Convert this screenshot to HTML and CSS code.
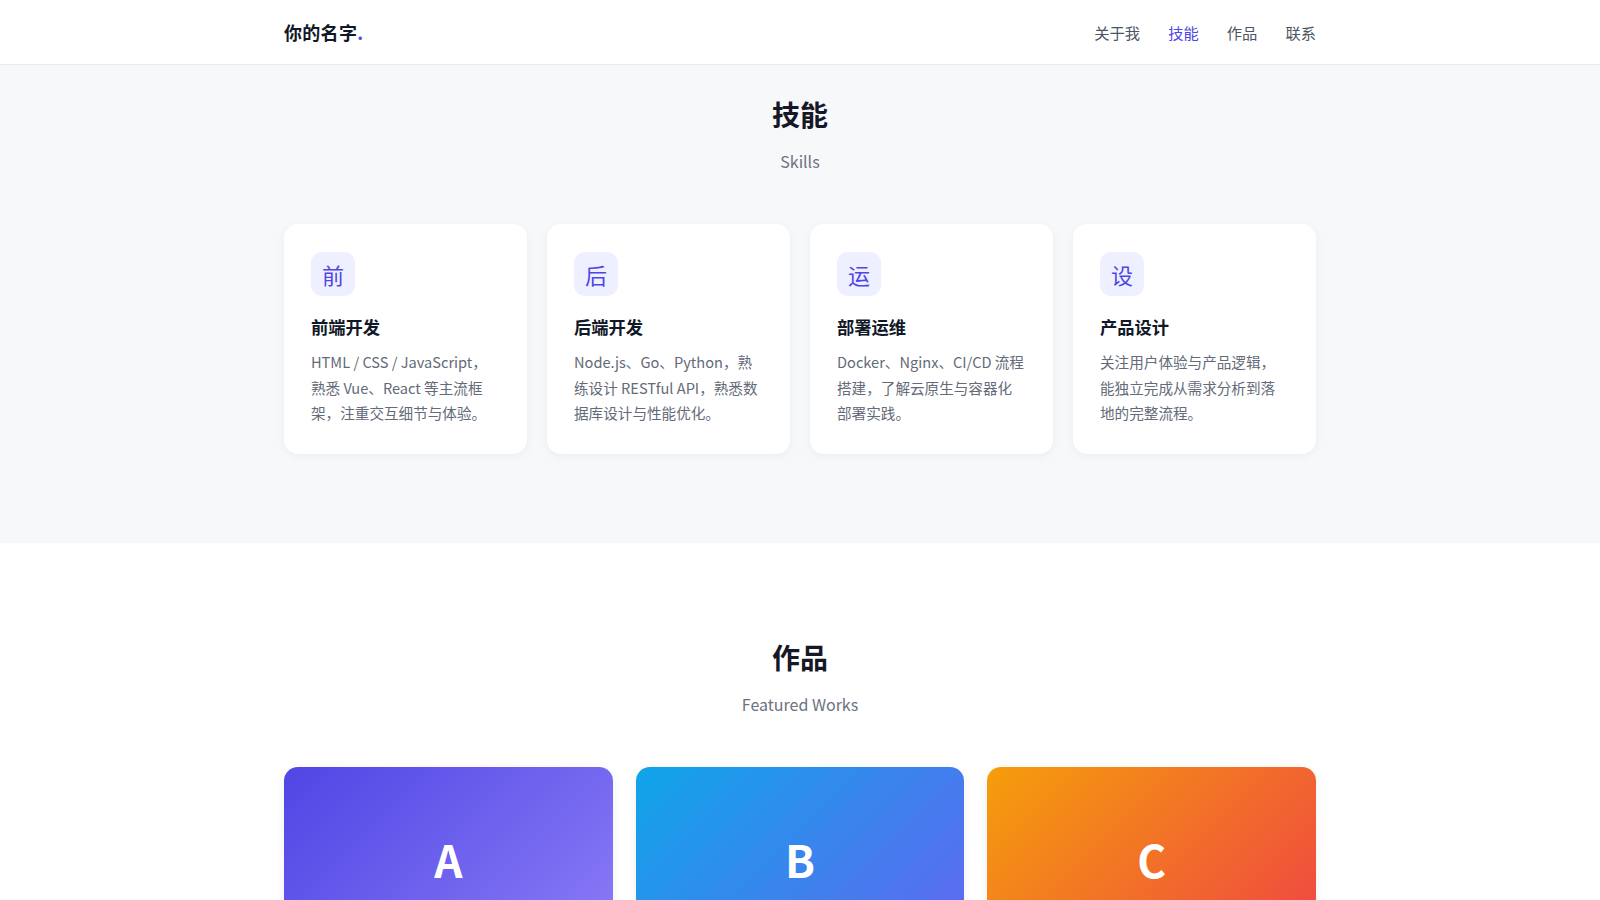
FILE: index.html
```html
<!DOCTYPE html>
<html lang="zh-CN">
<head>
<meta charset="utf-8">
<title>你的名字</title>
<link rel="stylesheet" href="styles.css">
</head>
<body>
<header class="site-header">
  <div class="container header-inner">
    <div class="logo">你的名字<span class="logo-dot">.</span></div>
    <nav class="nav">
      <a href="#about">关于我</a>
      <a href="#skills" class="active">技能</a>
      <a href="#works">作品</a>
      <a href="#contact">联系</a>
    </nav>
  </div>
</header>

<section class="section section-skills" id="skills">
  <div class="container">
    <h2 class="section-title">技能</h2>
    <p class="section-sub">Skills</p>
    <div class="skills-grid">
      <div class="skill-card">
        <div class="skill-icon">前</div>
        <h3 class="skill-title">前端开发</h3>
        <p class="skill-desc">HTML / CSS / JavaScript，熟悉 Vue、React 等主流框架，注重交互细节与体验。</p>
      </div>
      <div class="skill-card">
        <div class="skill-icon">后</div>
        <h3 class="skill-title">后端开发</h3>
        <p class="skill-desc">Node.js、Go、Python，熟练设计 RESTful API，熟悉数据库设计与性能优化。</p>
      </div>
      <div class="skill-card">
        <div class="skill-icon">运</div>
        <h3 class="skill-title">部署运维</h3>
        <p class="skill-desc">Docker、Nginx、CI/CD 流程搭建，了解云原生与容器化部署实践。</p>
      </div>
      <div class="skill-card">
        <div class="skill-icon">设</div>
        <h3 class="skill-title">产品设计</h3>
        <p class="skill-desc">关注用户体验与产品逻辑，能独立完成从需求分析到落地的完整流程。</p>
      </div>
    </div>
  </div>
</section>

<section class="section section-works" id="works">
  <div class="container">
    <h2 class="section-title">作品</h2>
    <p class="section-sub">Featured Works</p>
    <div class="works-grid">
      <div class="work-card">
        <div class="work-cover cover-a">A</div>
        <div class="work-body"></div>
      </div>
      <div class="work-card">
        <div class="work-cover cover-b">B</div>
        <div class="work-body"></div>
      </div>
      <div class="work-card">
        <div class="work-cover cover-c">C</div>
        <div class="work-body"></div>
      </div>
    </div>
  </div>
</section>
</body>
</html>
```

FILE: styles.css
```css
* {
  box-sizing: border-box;
}

html, body {
  margin: 0;
  padding: 0;
}

body {
  font-family: "Noto Sans CJK SC", "Noto Sans", sans-serif;
  color: #111827;
  background: #ffffff;
}

.container {
  max-width: 1080px;
  margin: 0 auto;
  padding: 0 24px;
}

.site-header {
  height: 65px;
  background: #ffffff;
  border-bottom: 1px solid #e9ebef;
}

.header-inner {
  height: 64px;
  display: flex;
  align-items: center;
  justify-content: space-between;
}

.logo {
  font-size: 18px;
  font-weight: 700;
  color: #111827;
  letter-spacing: 0.3px;
}

.logo-dot {
  color: #4f46e5;
}

.nav {
  display: flex;
  gap: 28px;
}

.nav a {
  font-size: 15.3px;
  color: #4b5563;
  text-decoration: none;
}

.nav a.active {
  color: #4f46e5;
}

.section-skills {
  background: #f7f8fa;
  padding: 31px 0 89px;
}

.section-works {
  background: #ffffff;
  padding: 96px 0 0;
}

.section-title {
  margin: 0;
  text-align: center;
  font-size: 28px;
  line-height: 36px;
  font-weight: 700;
  color: #161827;
}

.section-sub {
  margin: 16px 0 0;
  text-align: center;
  font-size: 16px;
  line-height: 26px;
  color: #6b7280;
}

.skills-grid {
  margin-top: 50px;
  display: grid;
  grid-template-columns: repeat(4, 1fr);
  gap: 20px;
}

.skill-card {
  background: #ffffff;
  border-radius: 14px;
  padding: 28px 28px 28px 27px;
  box-shadow: 0 2px 10px rgba(17, 24, 39, 0.05);
}

.skill-icon {
  width: 44px;
  height: 44px;
  border-radius: 11px;
  background: #eef0ff;
  color: #4f46e5;
  font-size: 22px;
  display: flex;
  align-items: center;
  justify-content: center;
}

.skill-title {
  margin: 18px 0 0;
  font-size: 17.3px;
  line-height: 26px;
  font-weight: 700;
  color: #111827;
}

.skill-desc {
  margin: 9px 0 0;
  font-size: 14.6px;
  line-height: 25.5px;
  color: #646a78;
}

.works-grid {
  margin-top: 50px;
  display: grid;
  grid-template-columns: repeat(3, 1fr);
  gap: 23px;
}

.work-card {
  background: #ffffff;
  border-radius: 14px;
  overflow: hidden;
  box-shadow: 0 2px 12px rgba(17, 24, 39, 0.06);
}

.work-cover {
  height: 184px;
  display: flex;
  align-items: center;
  justify-content: center;
  color: #ffffff;
  font-size: 44px;
  font-weight: 700;
}

.cover-a {
  background: linear-gradient(135deg, #4f46e5 0%, #8b7cf6 100%);
}

.cover-b {
  background: linear-gradient(135deg, #0ea5e9 0%, #6366f1 100%);
}

.cover-c {
  background: linear-gradient(135deg, #f59e0b 0%, #ef4444 100%);
}

.work-body {
  height: 120px;
}
```
